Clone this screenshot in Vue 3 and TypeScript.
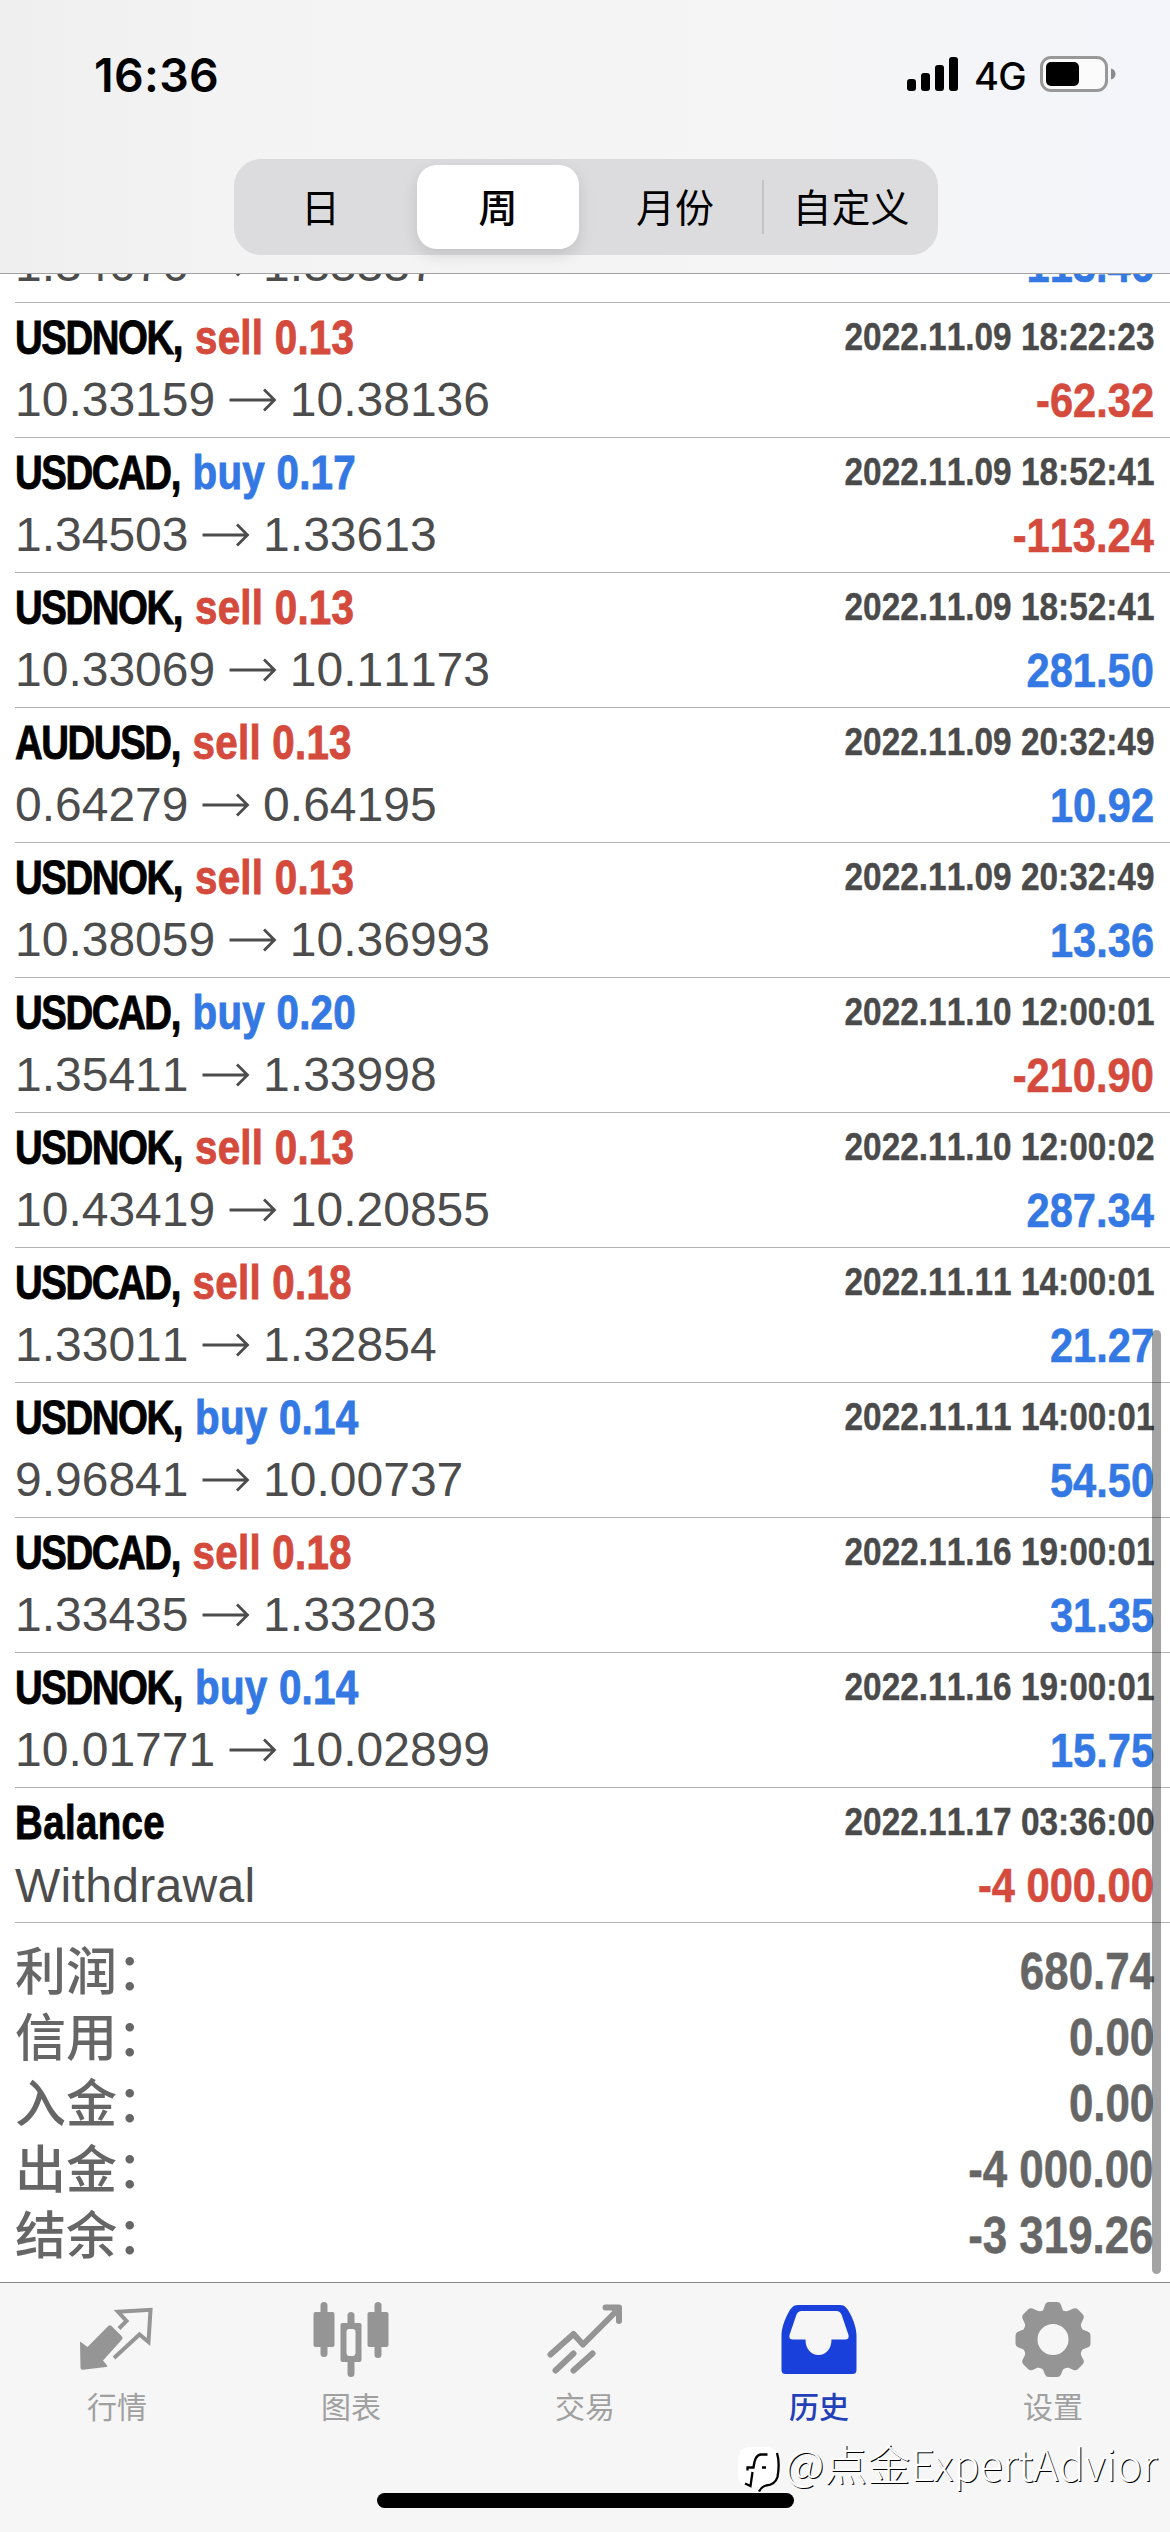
<script setup lang="ts">
interface Deal {
  symbol?: string
  side?: 'buy' | 'sell'
  volume?: string
  time?: string
  open?: string
  close?: string
  note?: string
  profit: string
}

const deals: Deal[] = [
  // Scrolled mostly under the header, only its price line shows.
  { open: '1.34676', close: '1.33337', profit: '113.46' },
  { symbol: 'USDNOK', side: 'sell', volume: '0.13', time: '2022.11.09 18:22:23', open: '10.33159', close: '10.38136', profit: '-62.32' },
  { symbol: 'USDCAD', side: 'buy', volume: '0.17', time: '2022.11.09 18:52:41', open: '1.34503', close: '1.33613', profit: '-113.24' },
  { symbol: 'USDNOK', side: 'sell', volume: '0.13', time: '2022.11.09 18:52:41', open: '10.33069', close: '10.11173', profit: '281.50' },
  { symbol: 'AUDUSD', side: 'sell', volume: '0.13', time: '2022.11.09 20:32:49', open: '0.64279', close: '0.64195', profit: '10.92' },
  { symbol: 'USDNOK', side: 'sell', volume: '0.13', time: '2022.11.09 20:32:49', open: '10.38059', close: '10.36993', profit: '13.36' },
  { symbol: 'USDCAD', side: 'buy', volume: '0.20', time: '2022.11.10 12:00:01', open: '1.35411', close: '1.33998', profit: '-210.90' },
  { symbol: 'USDNOK', side: 'sell', volume: '0.13', time: '2022.11.10 12:00:02', open: '10.43419', close: '10.20855', profit: '287.34' },
  { symbol: 'USDCAD', side: 'sell', volume: '0.18', time: '2022.11.11 14:00:01', open: '1.33011', close: '1.32854', profit: '21.27' },
  { symbol: 'USDNOK', side: 'buy', volume: '0.14', time: '2022.11.11 14:00:01', open: '9.96841', close: '10.00737', profit: '54.50' },
  { symbol: 'USDCAD', side: 'sell', volume: '0.18', time: '2022.11.16 19:00:01', open: '1.33435', close: '1.33203', profit: '31.35' },
  { symbol: 'USDNOK', side: 'buy', volume: '0.14', time: '2022.11.16 19:00:01', open: '10.01771', close: '10.02899', profit: '15.75' },
  { symbol: 'Balance', time: '2022.11.17 03:36:00', note: 'Withdrawal', profit: '-4 000.00' },
]

const totals = [
  { label: '利润：', value: '680.74' },
  { label: '信用：', value: '0.00' },
  { label: '入金：', value: '0.00' },
  { label: '出金：', value: '-4 000.00' },
  { label: '结余：', value: '-3 319.26' },
]

const periods = ['日', '周', '月份', '自定义']
const activePeriod = '周'
</script>

<template>
  <div class="screen">
    <header class="header">
      <div class="status">
        <span class="clock">16:36</span>
        <div class="status-right">
          <svg class="signal" width="51" height="34" viewBox="0 0 51 34">
            <rect x="0" y="22" width="9" height="12" rx="3" />
            <rect x="14" y="16" width="9" height="18" rx="3" />
            <rect x="28" y="8" width="9" height="26" rx="3" />
            <rect x="42" y="0" width="9" height="34" rx="3" />
          </svg>
          <span class="network">4G</span>
          <svg class="battery" width="76" height="36" viewBox="0 0 76 36">
            <rect x="1.5" y="1.5" width="65" height="33" rx="9.5" fill="#fbfbfc" stroke="#989898" stroke-width="3" />
            <rect x="6" y="6" width="33" height="24" rx="5" fill="#000" />
            <path d="M71 12.500c3 .8 4.500 3 4.500 5.500s-1.500 4.700-4.500 5.500z" fill="#8a8a8a" />
          </svg>
        </div>
      </div>
      <div class="segments">
        <div v-for="p in periods" :key="p" class="segment" :class="{ active: p === activePeriod, last: p === '自定义' }">{{ p }}</div>
      </div>
    </header>

    <main class="content">
      <section v-for="(d, i) in deals" :key="i" class="deal" :class="{ clipped: !d.symbol }">
        <div v-if="d.symbol" class="deal-top">
          <div class="title">
            <span class="symbol" :class="{ plain: !d.side }">{{ d.symbol }}<template v-if="d.side">,</template></span>
            <span v-if="d.side" class="order" :class="d.side">{{ d.side }} {{ d.volume }}</span>
          </div>
          <time class="time">{{ d.time }}</time>
        </div>
        <div class="deal-bottom">
          <div v-if="d.note" class="note">{{ d.note }}</div>
          <div v-else class="prices">
            <span>{{ d.open }}</span>
            <svg class="arrow" width="48" height="26" viewBox="0 0 48 26">
              <path d="M.5 13H45.500M35 2.500L45.500 13L35 23.500" fill="none" stroke="currentColor" stroke-width="2.800" />
            </svg>
            <span>{{ d.close }}</span>
          </div>
          <span class="profit" :class="{ loss: d.profit.startsWith('-') }">{{ d.profit }}</span>
        </div>
      </section>
      <dl class="totals">
        <div v-for="t in totals" :key="t.label" class="total">
          <dt>{{ t.label }}</dt>
          <dd>{{ t.value }}</dd>
        </div>
      </dl>
      <div class="scrollbar"></div>
    </main>

    <nav class="tabs">
      <div class="tab">
        <svg width="76" height="76" viewBox="0 0 76 76">
          <path d="M1 35.500L8.500 41L29.500 19.800Q31 18.500 32.500 20L43 30.500Q44.200 32 43 33.500L24 54.500L28.500 60Q28 61 27 61L4 63.800Q1.500 64 1.500 62Z" fill="currentColor" />
          <path d="M40 22.500L47.500 15L39 5.800L71.500 3.800L69.500 36L60.500 28.500L35 52" fill="none" stroke="currentColor" stroke-width="4" />
        </svg>
        <span>行情</span>
      </div>
      <div class="tab">
        <svg width="76" height="76" viewBox="0 0 76 76" fill="currentColor">
          <rect x="7.500" y="-4" width="7" height="55" rx="3.500" />
          <rect x=".5" y="6" width="21" height="35" rx="2" />
          <path d="M34.500 20V9.500a3.500 3.500 0 0 1 7 0V20Z" />
          <rect x="34.500" y="50" width="7" height="21" rx="3.500" />
          <path fill-rule="evenodd" d="M29.500 17H46.500Q48.500 17 48.500 19V54Q48.500 56 46.500 56H29.500Q27.500 56 27.500 54V19Q27.500 17 29.500 17ZM36 23Q33.500 23 33.500 26V46.500Q33.500 50 36.500 50H39.500Q42.500 50 42.500 46.500V26Q42.500 23 39.500 23Z" />
          <rect x="61.500" y="-4" width="7" height="56" rx="3.500" />
          <rect x="54.500" y="6" width="21" height="35" rx="2" />
        </svg>
        <span>图表</span>
      </div>
      <div class="tab">
        <svg width="76" height="76" viewBox="0 0 76 76" fill="none" stroke="currentColor" stroke-width="6" stroke-linecap="round" stroke-linejoin="round">
          <path d="M3.500 48.500L26.500 28L36 38.500L70.500 4" />
          <path d="M58.500 1.500H72V15" />
          <path d="M8.500 64.500L26.500 47.500M26.500 64.500L45.500 47.500" />
          <path d="M62 1.500L72 1.500L72 11Z" fill="currentColor" stroke="none" />
        </svg>
        <span>交易</span>
      </div>
      <div class="tab current">
        <svg width="76" height="76" viewBox="0 0 76 76">
          <path fill="currentColor" fill-rule="evenodd" d="M17 -1H59C64 -1 66 2 69 7.500C73 15 75.500 23 75.500 30V64Q75.500 68 71.500 68H4.500Q.5 68 .5 64V30C.5 23 3 15 7 7.500C10 2 12 -1 17 -1ZM20.500 5Q17 5 15.500 8.500L8.500 29Q7.500 33.500 12 33.500H24.500C24.500 43 30 49 37.500 49S50.500 43 50.500 33.500H64Q68.500 33.500 67.500 29L60.500 8.500Q59 5 55.500 5Z" />
        </svg>
        <span>历史</span>
      </div>
      <div class="tab">
        <svg width="76" height="76" viewBox="0 0 76 76">
          <path fill="currentColor" fill-rule="evenodd" d="M34 -4H42Q45 -4 46 -1L48 4.500Q51 6 54 4.500L58.500 2.500Q61 1.500 63 3.500L67.500 8Q69.500 10 68.500 12.500L66 18Q65.500 21 67.500 23.500L72.500 25.500Q75.500 26.500 75.500 29.500V37.500Q75.500 40.500 72.500 41.500L67.500 43.500Q65.500 46 66 49L68.500 54Q69.500 56.500 67.500 58.500L63 63Q61 65 58.500 64L53.500 61.800Q50.500 61.500 48 63.500L46 68.500Q45 71 42 71H34Q31 71 30 68.500L28 63.500Q25.500 61.500 22.500 61.800L17.500 64Q15 65 13 63L8.500 58.500Q6.500 56.500 7.500 54L10 49Q10.500 46 8.500 43.500L3.500 41.500Q.5 40.500 .5 37.500V29.500Q.5 26.500 3.500 25.500L8.500 23.500Q10.500 21 10 18L7.500 12.500Q6.500 10 8.500 8L13 3.500Q15 1.500 17.500 2.500L22 4.500Q25 6 28 4.500L30 -1Q31 -4 34 -4ZM38 18A15.500 15.500 0 1 0 38 49A15.500 15.500 0 1 0 38 18Z" />
        </svg>
        <span>设置</span>
      </div>
      <div class="home"></div>
      <div class="watermark">
        <svg width="43" height="46" viewBox="0 0 43 46">
          <path d="M10 0H30Q41 2 41 12V30Q40 37 32 39Q24 39 21 45L20 40H10Q0 38 0 28V12Q1 1 10 0Z" fill="#fff" />
          <path d="M39 6Q42 16 39.500 30Q37 38 28 38.500Q23 40 21 44.500M9.500 23.500V20.500H15.500Q17 7.500 23 7.500H29.500M14.500 25L12.500 39L7 36.500M24 20.500H28" fill="none" stroke="#000" stroke-width="2.300" />
        </svg>
        <span>@点金ExpertAdvior</span>
      </div>
    </nav>
  </div>
</template>

<style>
body {
  background: #fff;
}
</style>

<style scoped>
.screen {
  width: 1170px;
  height: 2532px;
  display: flex;
  flex-direction: column;
  overflow: hidden;
  background: #fff;
  font-family: "Liberation Sans", "Noto Sans CJK SC", sans-serif;
  font-kerning: none;
}

.header {
  flex: none;
  box-sizing: border-box;
  height: 274px;
  border-bottom: 1px solid #a2a2a4;
  background: linear-gradient(90deg, #efeff0 0, #f3f3f4 18%, #f5f5f6 70%, #f3f5fa 100%);
}

.status {
  display: flex;
  justify-content: space-between;
  height: 159px;
  padding: 0 54px 0 94px;
}

.clock {
  font: 600 46.5px/150px Inter, sans-serif;
  letter-spacing: 0.3px;
}

.status-right {
  display: flex;
  align-items: flex-start;
}

.signal {
  margin: 57px 16px 0 0;
}

.network {
  width: 66px;
  font: 500 38px/152px Inter, sans-serif;
  letter-spacing: -0.7px;
}

.battery {
  margin-top: 56px;
}

.segments {
  display: flex;
  width: 704px;
  height: 96px;
  margin-left: 234px;
  border-radius: 27px;
  background: #dcdcde;
}

.segment {
  position: relative;
  box-sizing: border-box;
  width: 176px;
  padding-left: 2px;
  text-align: center;
  font: 400 39px/92px "Noto Sans CJK SC", sans-serif;
  color: #000;
}

.segment:first-child {
  padding: 0 3px 0 0;
}

.segment.active {
  width: 162px;
  height: 84px;
  margin: 6px 7px;
  padding: 0;
  line-height: 80px;
  border-radius: 20px;
  background: #fff;
  font-weight: 500;
  box-shadow: 0 6px 16px rgba(0, 0, 0, 0.12);
}

.segment.last::before {
  content: "";
  position: absolute;
  left: 0;
  top: 21px;
  width: 2px;
  height: 54px;
  background: #c3c3c7;
}

.content {
  position: relative;
  flex: none;
  height: 2008px;
  display: flex;
  flex-direction: column;
}

.deal {
  flex: none;
  box-sizing: border-box;
  height: 135px;
  margin-left: 15px;
  padding-right: 16px;
  border-bottom: 1px solid #b4b4b4;
}

.deal.clipped {
  height: 29px;
  overflow: hidden;
  display: flex;
  flex-direction: column;
  justify-content: flex-end;
}

.deal-top,
.deal-bottom {
  flex: none;
  display: flex;
  justify-content: space-between;
  white-space: nowrap;
}

.deal-top {
  height: 67px;
  line-height: 70px;
}

.deal-bottom {
  height: 67px;
  line-height: 62px;
}

.title {
  display: flex;
  gap: 16px;
  font-size: 48px;
  font-weight: 700;
  transform: scaleX(0.8);
  transform-origin: 0 50%;
  -webkit-text-stroke: 0.9px currentColor;
}

.symbol {
  letter-spacing: -1.8px;
}

.symbol.plain {
  letter-spacing: 0.5px;
}

.order {
  letter-spacing: 0.3px;
  transform: scaleX(1.05);
  transform-origin: 0 50%;
}

.buy {
  color: #3478e3;
}

.sell {
  color: #d44a3c;
}

.time {
  font-size: 38.5px;
  font-weight: 700;
  line-height: 68px;
  color: #4a4a4a;
  transform: scaleX(0.867);
  transform-origin: 100% 50%;
  -webkit-text-stroke: 0.4px currentColor;
}

.prices,
.note {
  font-size: 48px;
  color: #4c4c4c;
}

.note {
  letter-spacing: 0.3px;
}

.prices {
  display: flex;
  align-items: center;
  height: 59px;
  line-height: 59px;
  gap: 13.3px;
}

.arrow {
  margin-top: 1px;
}

.profit {
  font-size: 48px;
  font-weight: 700;
  color: #3478e3;
  transform: scaleX(0.867);
  transform-origin: 100% 50%;
  -webkit-text-stroke: 0.6px currentColor;
}

.profit.loss {
  color: #d44a3c;
}

.totals {
  margin: 14px 16px 0 15px;
}

.total {
  display: flex;
  justify-content: space-between;
  height: 66px;
  color: #666;
}

.total dt {
  font: 500 51px/62px "Noto Sans CJK SC", sans-serif;
}

.total dd {
  margin: 0;
  font-size: 51px;
  font-weight: 700;
  line-height: 70px;
  transform: scaleX(0.86);
  transform-origin: 100% 50%;
  -webkit-text-stroke: 0.5px currentColor;
}

.scrollbar {
  position: absolute;
  top: 1056px;
  left: 1152px;
  width: 9px;
  height: 944px;
  border-radius: 5px;
  background: rgba(0, 0, 0, 0.36);
}

.tabs {
  position: relative;
  flex: 1;
  display: flex;
  box-sizing: border-box;
  border-top: 1px solid #88888a;
  background: #f6f6f6;
}

.tab {
  flex: 1;
  display: flex;
  flex-direction: column;
  align-items: center;
  padding-top: 23px;
  color: #959595;
}

.tab svg {
  overflow: visible;
}

.tab span {
  margin-top: 2px;
  font: 400 30px/42px "Noto Sans CJK SC", sans-serif;
  color: #a0a0a0;
}

.tab.current {
  color: #1a40dc;
}

.tab.current span {
  color: #2340b8;
  font-weight: 500;
}

.home {
  position: absolute;
  left: 377px;
  top: 210px;
  width: 417px;
  height: 15px;
  border-radius: 8px;
  background: #000;
}

.watermark {
  position: absolute;
  left: 738px;
  top: 164px;
  display: flex;
  align-items: flex-start;
  gap: 4px;
}

.watermark span {
  font: 300 43px/30px "Noto Sans CJK SC", sans-serif;
  white-space: nowrap;
  color: #fff;
  text-shadow: 1px 1px 0 #000;
}
</style>
